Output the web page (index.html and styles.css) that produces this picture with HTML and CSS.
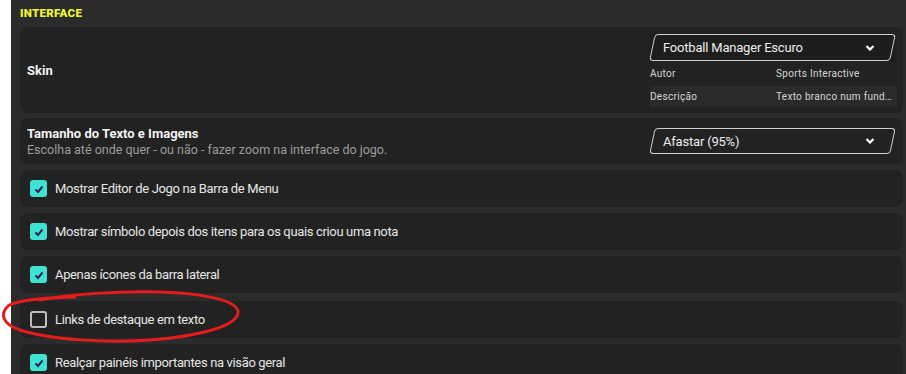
FILE: index.html
```html
<!DOCTYPE html>
<html lang="pt">
<head>
    <meta charset="UTF-8">
    <meta name="viewport" content="width=device-width, initial-scale=1.0">
    <title>Preferências - Interface</title>
    <link rel="stylesheet" href="styles.css">
</head>
<body>
    <div class="page">
        <div class="panel">
            <h2 class="section-title">INTERFACE</h2>

            <div class="card card-skin">
                <span class="setting-title">Skin</span>
                <div class="skin-box">
                    <div class="dropdown">
                        <span>Football Manager Escuro</span>
                        <svg class="chevron" viewBox="0 0 10 6" width="10" height="6"><polyline points="1.5,1 5,4.5 8.5,1"/></svg>
                    </div>
                    <div class="meta-row">
                        <span class="meta-key">Autor</span>
                        <span class="meta-value">Sports Interactive</span>
                    </div>
                    <div class="meta-row alt">
                        <span class="meta-key">Descrição</span>
                        <span class="meta-value">Texto branco num fundo escuro</span>
                    </div>
                </div>
            </div>

            <div class="card card-zoom">
                <div class="setting-text">
                    <span class="setting-title">Tamanho do Texto e Imagens</span>
                    <span class="setting-desc">Escolha até onde quer - ou não - fazer zoom na interface do jogo.</span>
                </div>
                <div class="dropdown">
                    <span>Afastar (95%)</span>
                    <svg class="chevron" viewBox="0 0 10 6" width="10" height="6"><polyline points="1.5,1 5,4.5 8.5,1"/></svg>
                </div>
            </div>

            <label class="card check-row">
                <span class="box checked"><svg viewBox="0 0 12 12" width="12" height="12"><polyline points="2.5,6.5 5,9 9.5,3.5"/></svg></span>
                Mostrar Editor de Jogo na Barra de Menu
            </label>
            <label class="card check-row">
                <span class="box checked"><svg viewBox="0 0 12 12" width="12" height="12"><polyline points="2.5,6.5 5,9 9.5,3.5"/></svg></span>
                Mostrar símbolo depois dos itens para os quais criou uma nota
            </label>
            <label class="card check-row">
                <span class="box checked"><svg viewBox="0 0 12 12" width="12" height="12"><polyline points="2.5,6.5 5,9 9.5,3.5"/></svg></span>
                Apenas ícones da barra lateral
            </label>
            <label class="card check-row spaced">
                <span class="box"></span>
                Links de destaque em texto
            </label>
            <label class="card check-row">
                <span class="box checked"><svg viewBox="0 0 12 12" width="12" height="12"><polyline points="2.5,6.5 5,9 9.5,3.5"/></svg></span>
                Realçar painéis importantes na visão geral
            </label>
        </div>

        <!-- marcação à mão por cima da captura -->
        <svg class="annotation" viewBox="0 0 250 60" width="250" height="60">
            <path d="M40 10 C 70 4, 120 1, 160 2 C 200 3, 238 10, 238 22 C 238 36, 200 46, 150 50 C 110 53, 50 50, 20 40 C 2 34, 0 24, 8 16 C 16 10, 40 8, 75 7"/>
        </svg>
    </div>
</body>
</html>
```

FILE: styles.css
```css
body {
    margin: 0;
    background: #ffffff;
    font-family: Roboto, "Liberation Sans", sans-serif;
    overflow: hidden;
}
.page {
    position: relative;
    height: 374px;
    padding-left: 11px;
}
.panel {
    background: #2b2b2b;
    height: 100%;
    padding: 0 3px 0 9px;
    display: flex;
    flex-direction: column;
}
.section-title {
    margin: 0;
    height: 27px;
    line-height: 27px;
    font-size: 11.5px;
    font-weight: 900;
    color: #eef53a;
    letter-spacing: 0.3px;
}
.card {
    background: #222222;
    border-radius: 8px;
    flex-shrink: 0;
}
.setting-title {
    font-size: 13px;
    font-weight: 700;
    color: #f2f2f2;
}
.card-skin {
    height: 86px;
    box-sizing: border-box;
    padding: 7px 6px 6px 7px;
    display: flex;
    align-items: center;
    justify-content: space-between;
}
.skin-box {
    width: 247px;
    align-self: stretch;
    display: flex;
    flex-direction: column;
}
.skin-box .dropdown {
    background: #1d1d1d;
    height: 27px;
}
.meta-row {
    display: flex;
    height: 25px;
    align-items: center;
    font-size: 10px;
    color: #d6d6d6;
    letter-spacing: 0.3px;
}
.meta-row.alt {
    height: 21px;
    background: #2a2a2a;
}
.meta-key {
    width: 126px;
    flex-shrink: 0;
}
.meta-value {
    white-space: nowrap;
    overflow: hidden;
    text-overflow: ellipsis;
    padding-right: 4px;
}
.dropdown {
    position: relative;
    width: 245px;
    height: 26px;
    box-sizing: border-box;
    padding: 0 20px 0 13px;
    display: flex;
    align-items: center;
    justify-content: space-between;
    font-size: 13px;
    letter-spacing: -0.2px;
    color: #ececec;
}
.dropdown::before {
    content: "";
    position: absolute;
    inset: 0 2px;
    border: 1.5px solid #cfcfcf;
    border-radius: 4px;
    transform: skewX(-12deg);
}
.chevron polyline {
    fill: none;
    stroke: #ffffff;
    stroke-width: 2.2;
}
.card-zoom {
    margin-top: 5px;
    height: 46px;
    box-sizing: border-box;
    padding: 0 8px 0 7px;
    display: flex;
    align-items: center;
    justify-content: space-between;
}
.setting-text {
    display: flex;
    flex-direction: column;
    gap: 1px;
}
.setting-desc {
    font-size: 12.5px;
    color: #9c9c9c;
}
.check-row {
    margin-top: 6px;
    height: 37px;
    box-sizing: border-box;
    padding-left: 10px;
    display: flex;
    align-items: center;
    gap: 8px;
    font-size: 13px;
    letter-spacing: -0.35px;
    color: #e6e6e6;
}
.check-row.spaced {
    margin-top: 8px;
}
.box {
    width: 17px;
    height: 17px;
    box-sizing: border-box;
    border: 2px solid #bdbdbd;
    border-radius: 3px;
    display: flex;
    align-items: center;
    justify-content: center;
}
.box.checked {
    background: #3fe3d3;
    border: none;
}
.box polyline {
    fill: none;
    stroke: #33204f;
    stroke-width: 2;
}
.annotation {
    position: absolute;
    left: 0;
    top: 290px;
}
.annotation path {
    fill: none;
    stroke: #e41c1c;
    stroke-width: 3;
    stroke-linecap: round;
}
```
